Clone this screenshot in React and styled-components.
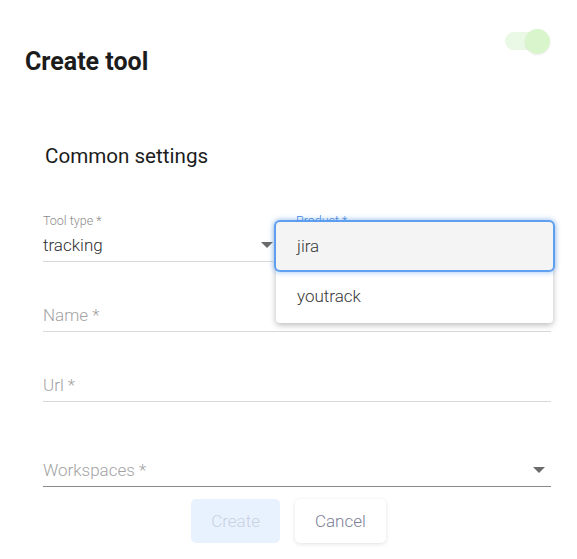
import React from 'react';
import styled, { createGlobalStyle } from 'styled-components';

// STYLES

const GlobalStyle = createGlobalStyle`
  html, body {
    margin: 0;
    padding: 0;
    background: #ffffff;
    font-family: 'Roboto', 'Liberation Sans', sans-serif;
  }
`;

const Page = styled.div`
  width: 577px;
  height: 559px;
  overflow: hidden;
  background: #ffffff;
`;

const Header = styled.div`
  display: flex;
  justify-content: space-between;
  align-items: flex-start;
  padding: 29px 27px 0 25px;
`;

const Title = styled.h1`
  margin: 19px 0 0;
  font-size: 25px;
  line-height: 28px;
  font-weight: 700;
  color: #1c1c1c;
`;

const Toggle = styled.div`
  position: relative;
  width: 45px;
  height: 25px;
`;
const ToggleTrack = styled.div`
  position: absolute;
  left: 0;
  top: 3px;
  width: 36px;
  height: 18px;
  border-radius: 9px;
  background: #e9f9e5;
`;
const ToggleThumb = styled.div`
  position: absolute;
  right: 0;
  top: 0;
  width: 25px;
  height: 25px;
  border-radius: 50%;
  background: #d8f5cc;
  box-shadow: 0 1px 2px rgba(0, 0, 0, 0.08);
`;

const SectionTitle = styled.h2`
  margin: 68px 0 0 45px;
  font-size: 20.6px;
  line-height: 24px;
  font-weight: 400;
  color: #1c1c1c;
`;

const Form = styled.div`
  display: flex;
  flex-direction: column;
  padding: 45px 26px 0 43px;
`;

const Row = styled.div`
  position: relative;
  display: grid;
  grid-template-columns: 230px 1fr;
  column-gap: 3px;
`;

const FieldWrap = styled.div`
  margin-top: ${p => p.$gap || 0}px;
`;

const Label = styled.div`
  height: 16px;
  padding-left: ${p => p.$inset || 0}px;
  font-size: 12.5px;
  line-height: 16px;
  font-weight: 300;
  color: ${p => (p.$active ? '#3d86e0' : '#8c8c8c')};
`;

const InputLine = styled.div`
  display: flex;
  align-items: center;
  justify-content: space-between;
  height: 32px;
  padding-right: 2px;
  border-bottom: 1px solid ${p => (p.$dark ? '#8a8a8a' : '#d9d9d9')};
  font-size: 17px;
  font-weight: 300;
  color: ${p => (p.$placeholder ? '#a3a3a3' : '#2e2e2e')};
`;

const Arrow = styled.span`
  width: 0;
  height: 0;
  margin-right: ${p => p.$offset || 0}px;
  border-left: 6px solid transparent;
  border-right: 6px solid transparent;
  border-top: 6px solid #6b6b6b;
`;

const Menu = styled.div`
  position: absolute;
  top: 9px;
  left: 233px;
  right: -2px;
  padding-bottom: 3px;
  background: #ffffff;
  border-radius: 4px;
  box-shadow: 0 2px 6px rgba(0, 0, 0, 0.28);
  z-index: 2;
`;

const MenuItem = styled.div`
  display: flex;
  align-items: center;
  height: 48px;
  margin-top: ${p => (p.$focused ? 0 : 2)}px;
  padding-left: 21px;
  font-size: 17px;
  font-weight: 300;
  color: #383838;
  border-radius: 4px;
  background: ${p => (p.$focused ? '#f4f4f4' : 'transparent')};
  box-shadow: ${p =>
    p.$focused
      ? '0 0 0 2px rgba(80, 150, 240, 0.85), 0 0 5px 3px rgba(80, 150, 240, 0.45)'
      : 'none'};
`;

const Actions = styled.div`
  display: flex;
  justify-content: center;
  gap: 15px;
  margin-top: 12px;
`;

const Button = styled.button`
  height: 44px;
  padding: 0 20px;
  border: none;
  border-radius: 5px;
  font-family: 'Roboto', 'Liberation Sans', sans-serif;
  font-size: 17px;
  font-weight: 300;
  background: ${p => (p.$primary ? '#e8f1fe' : '#ffffff')};
  color: ${p => (p.$primary ? '#c8d2e2' : '#7c8098')};
  box-shadow: ${p => (p.$primary ? 'none' : '0 1px 4px rgba(0, 0, 0, 0.12)')};
`;

export default function App() {
  return (
    <Page>
      <GlobalStyle />
      <Header>
        <Title>Create tool</Title>
        <Toggle>
          <ToggleTrack />
          <ToggleThumb />
        </Toggle>
      </Header>

      <SectionTitle>Common settings</SectionTitle>

      <Form>
        <Row>
          <FieldWrap>
            <Label>Tool type *</Label>
            <InputLine>
              tracking
              <Arrow $offset={-2} />
            </InputLine>
          </FieldWrap>
          <FieldWrap>
            <Label $active $inset={20}>Product *</Label>
            <InputLine />
          </FieldWrap>
          <Menu>
            <MenuItem $focused>jira</MenuItem>
            <MenuItem>youtrack</MenuItem>
          </Menu>
        </Row>

        <FieldWrap $gap={21}>
          <Label />
          <InputLine $placeholder>Name *</InputLine>
        </FieldWrap>

        <FieldWrap $gap={21}>
          <Label />
          <InputLine $placeholder>Url *</InputLine>
        </FieldWrap>

        <FieldWrap $gap={36}>
          <Label />
          <InputLine $placeholder $dark>
            Workspaces *
            <Arrow $offset={4} />
          </InputLine>
        </FieldWrap>
      </Form>

      <Actions>
        <Button $primary>Create</Button>
        <Button>Cancel</Button>
      </Actions>
    </Page>
  );
}
